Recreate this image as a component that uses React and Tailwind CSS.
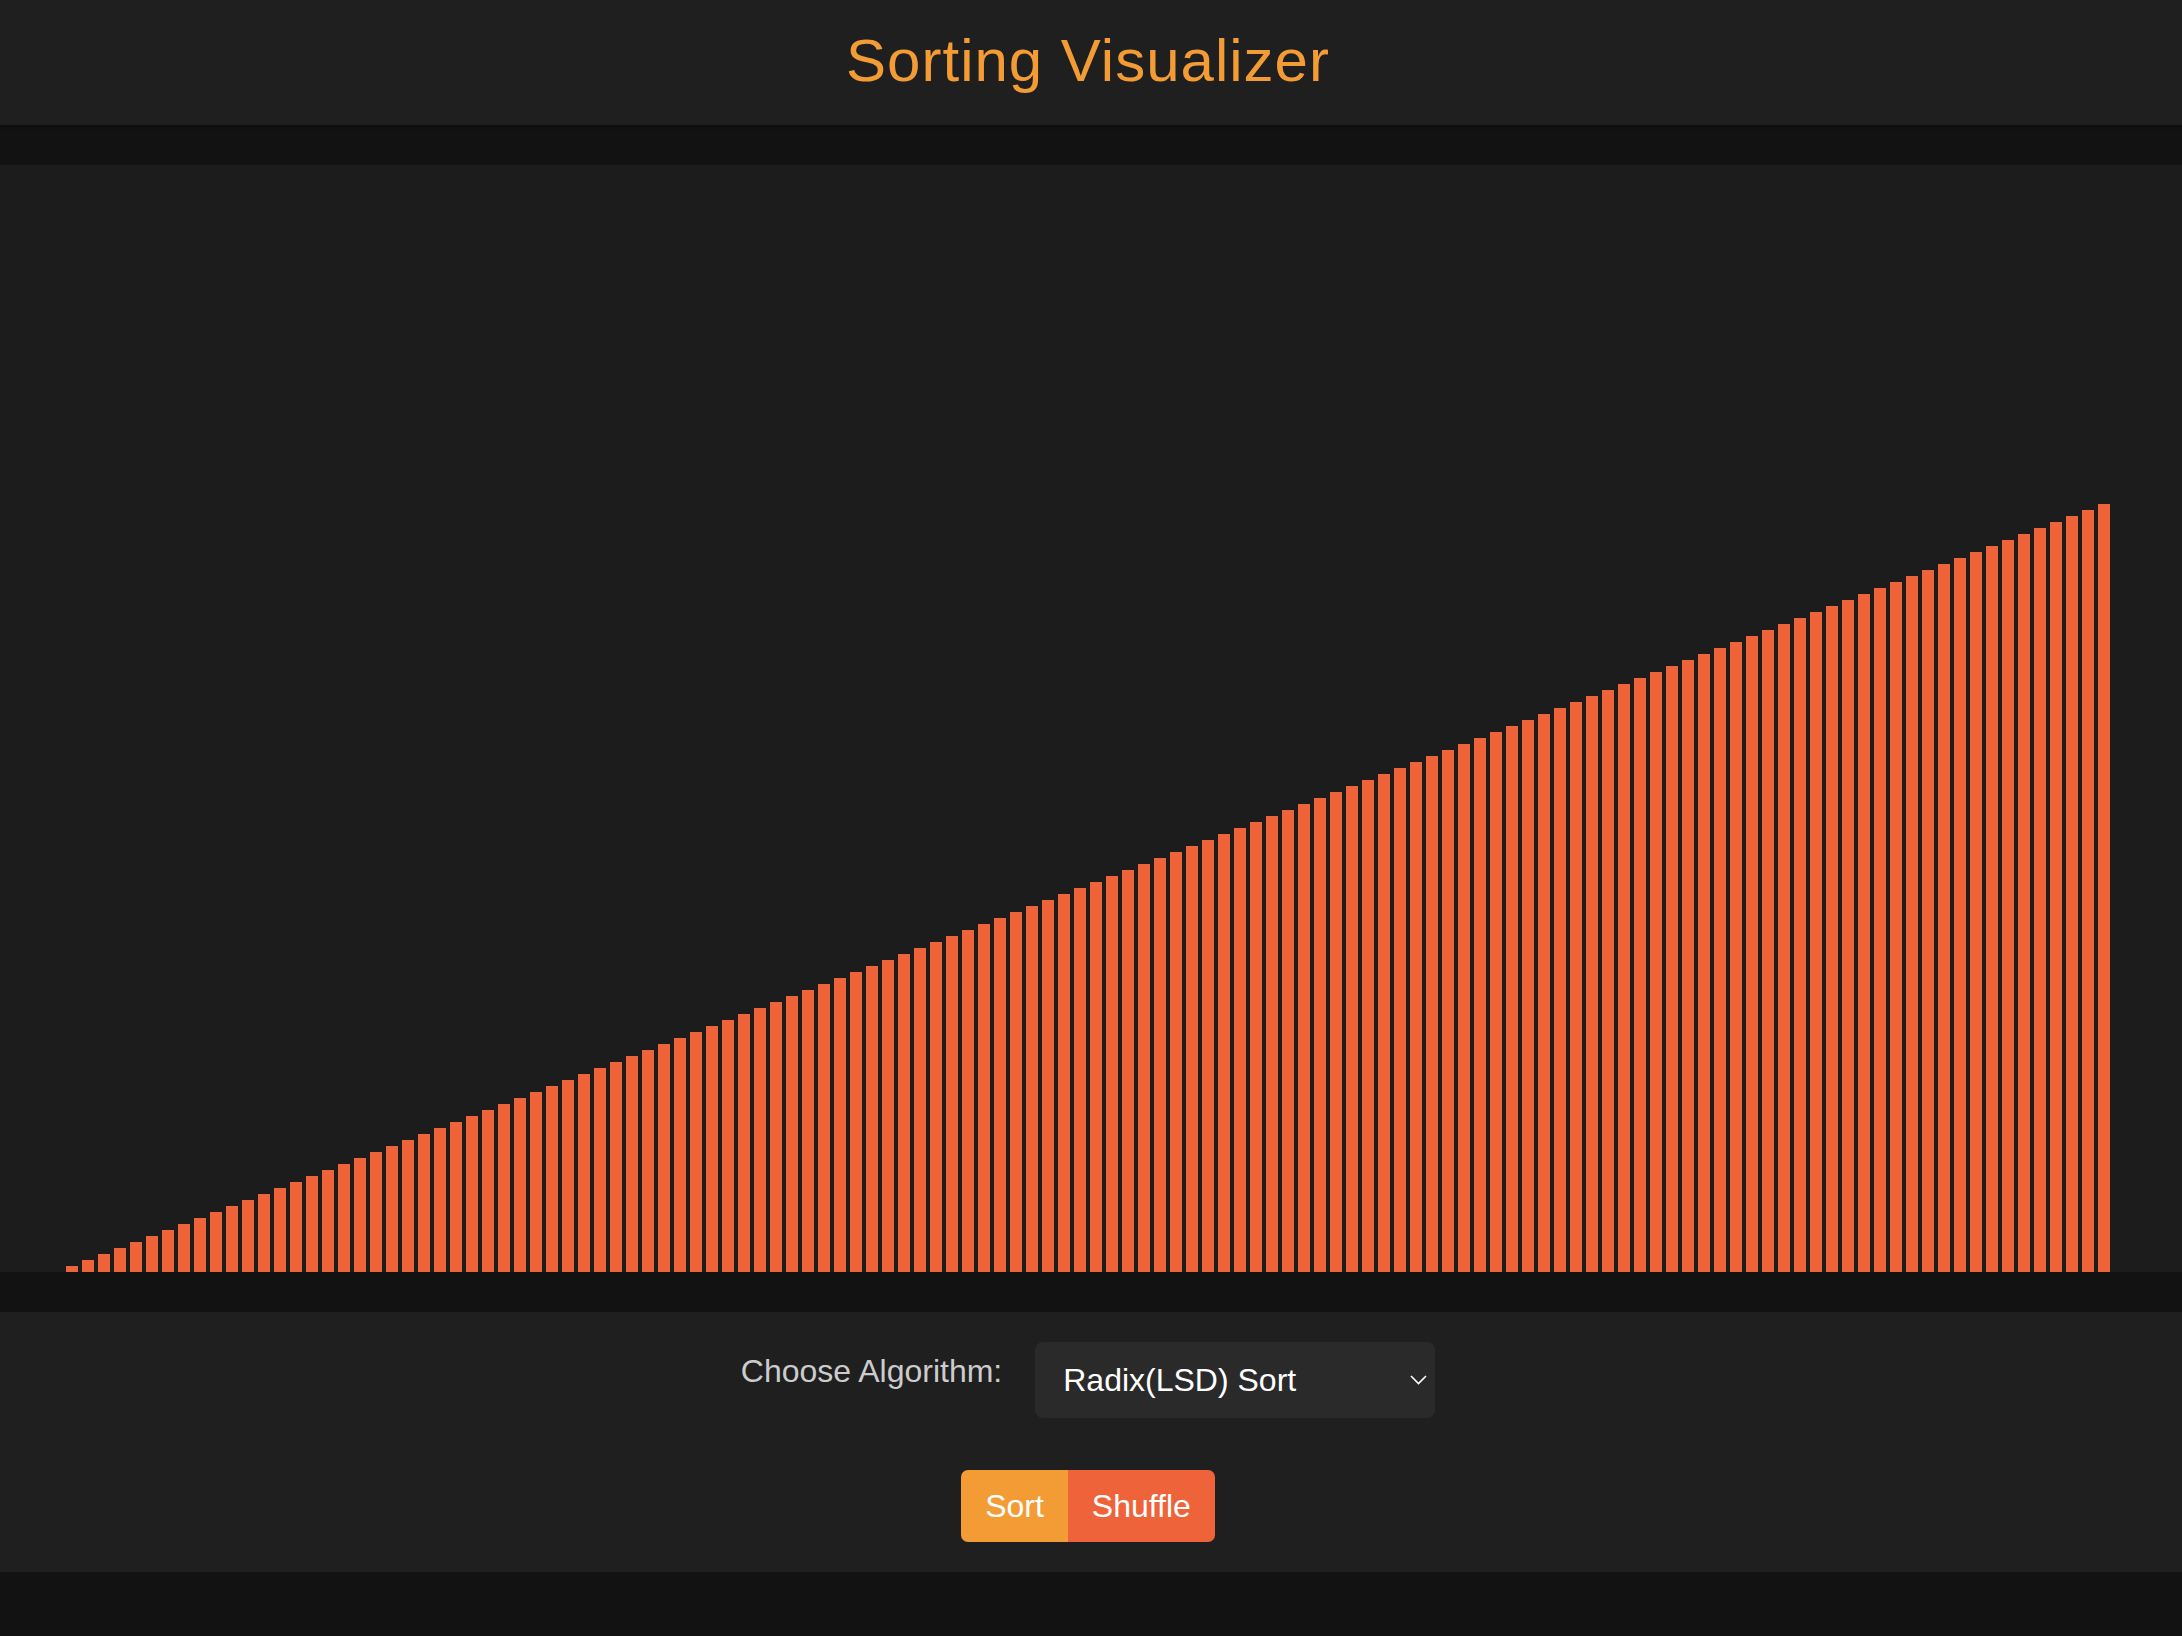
import { useState } from 'react';

const BAR_COUNT = 128;

export default function App() {
    const [algorithm] = useState('Radix(LSD) Sort');
    // Already sorted: heights go up 6px each
    const bars = Array.from({ length: BAR_COUNT }, (_, i) => (i + 1) * 6);

    return (
        <div className="min-h-[1636px] bg-[#121212] font-['Liberation_Sans',Arial,sans-serif]">
            {/* Header */}
            <header className="h-[125px] bg-[#1f1f1f] flex items-center justify-center pr-[6px] shadow-[0_2px_4px_rgba(0,0,0,0.35)] relative z-10">
                <h1 className="text-[60px] tracking-[1px] text-[#f39c36] pb-[4px]">Sorting Visualizer</h1>
            </header>

            {/* Bars */}
            <div className="mt-[40px] h-[1107px] bg-[#1c1c1c] flex items-end gap-[4px] pl-[66px]">
                {bars.map((h, i) => (
                    <div key={i} className="w-[12px] bg-[#ef6339]" style={{ height: h }} />
                ))}
            </div>

            {/* Controls */}
            <div className="mt-[40px] h-[260px] bg-[#1f1f1f] flex flex-col items-center pt-[30px] pr-[6px]">
                <div className="flex items-start gap-[33px]">
                    <span className="text-[32px] leading-[36px] mt-[11px] text-[#cccccc]">Choose Algorithm:</span>
                    <div className="w-[400px] h-[76px] rounded-[8px] bg-[#2a2a2a] flex items-center justify-between pl-[28px] pr-[8px]">
                        <span className="text-[32px] text-white">{algorithm}</span>
                        <svg width="17" height="10" viewBox="0 0 17 10" fill="none">
                            <polyline points="1,1 8.5,8.5 16,1" stroke="#ffffff" strokeWidth="1.6" />
                        </svg>
                    </div>
                </div>
                <div className="mt-[52px] flex h-[72px] rounded-[7px] overflow-hidden">
                    <button className="px-6 bg-[#f39c36] text-white text-[32px]">Sort</button>
                    <button className="px-6 bg-[#ee6339] text-white text-[32px]">Shuffle</button>
                </div>
            </div>
        </div>
    );
}
